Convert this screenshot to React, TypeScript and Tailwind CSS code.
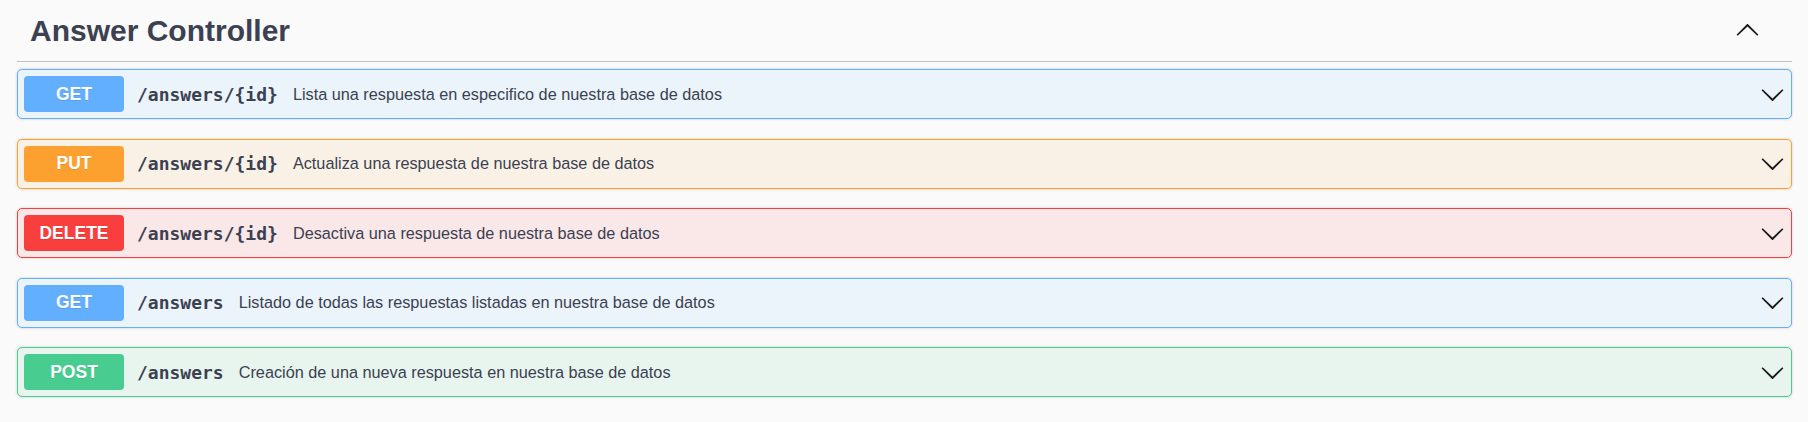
import React from "react";

type Method = "GET" | "PUT" | "DELETE" | "POST";

interface Operation {
  method: Method;
  path: string;
  summary: string;
}

const operations: Operation[] = [
  { method: "GET", path: "/answers/{id}", summary: "Lista una respuesta en especifico de nuestra base de datos" },
  { method: "PUT", path: "/answers/{id}", summary: "Actualiza una respuesta de nuestra base de datos" },
  { method: "DELETE", path: "/answers/{id}", summary: "Desactiva una respuesta de nuestra base de datos" },
  { method: "GET", path: "/answers", summary: "Listado de todas las respuestas listadas en nuestra base de datos" },
  { method: "POST", path: "/answers", summary: "Creación de una nueva respuesta en nuestra base de datos" },
];

const styles: Record<Method, { block: string; badge: string }> = {
  GET: { block: "bg-[#ebf3fb] border-[#61affe]", badge: "bg-[#61affe]" },
  PUT: { block: "bg-[#faf1e6] border-[#fca130]", badge: "bg-[#fca130]" },
  DELETE: { block: "bg-[#fae7e7] border-[#f93e3e]", badge: "bg-[#f93e3e]" },
  POST: { block: "bg-[#e8f5ef] border-[#49cc90]", badge: "bg-[#49cc90]" },
};

function Arrow({ up = false }: { up?: boolean }) {
  return (
    <svg
      width="25"
      height="25"
      viewBox="0 0 20 20"
      className={up ? "rotate-180" : ""}
      aria-hidden="true"
    >
      <path
        fill="#1a1a1a"
        d="M17.418 6.109c.272-.268.709-.268.979 0s.271.701 0 .969l-7.908 7.83c-.27.268-.707.268-.979 0l-7.908-7.83c-.27-.268-.27-.701 0-.969.271-.268.709-.268.979 0L10 13.25l7.418-7.141z"
      />
    </svg>
  );
}

function OpBlock({ op }: { op: Operation }) {
  const s = styles[op.method];
  return (
    <div
      className={`flex h-[50px] items-center rounded-[5px] border pl-[6px] pr-[6px] shadow-[0_0_3px_rgba(0,0,0,0.19)] ${s.block}`}
    >
      <span
        className={`flex h-[36px] w-[100px] shrink-0 items-center justify-center rounded-[4px] text-[17.5px] font-bold text-white [text-shadow:0_1px_0_rgba(0,0,0,0.1)] ${s.badge}`}
      >
        {op.method}
      </span>
      <span className="ml-[13px] font-['DejaVu_Sans_Mono',monospace] text-[18px] font-bold text-[#3b4151]">
        {op.path}
      </span>
      <span className="ml-[15px] flex-1 text-[16.25px] text-[#3b4151]">{op.summary}</span>
      <Arrow />
    </div>
  );
}

export default function App() {
  return (
    <div className="min-h-[422px] bg-[#fafafa] pl-[17px] pr-[16px] font-['Liberation_Sans',Arial,sans-serif]">
      <div className="flex h-[62px] items-center border-b border-[#c1c2c7] pl-[13px] pr-[32px]">
        <h3 className="flex-1 text-[30px] font-bold text-[#3b4151]">Answer Controller</h3>
        <Arrow up />
      </div>
      <div className="mt-[7px] flex flex-col gap-[19.5px]">
        {operations.map((op, i) => (
          <OpBlock key={i} op={op} />
        ))}
      </div>
    </div>
  );
}
